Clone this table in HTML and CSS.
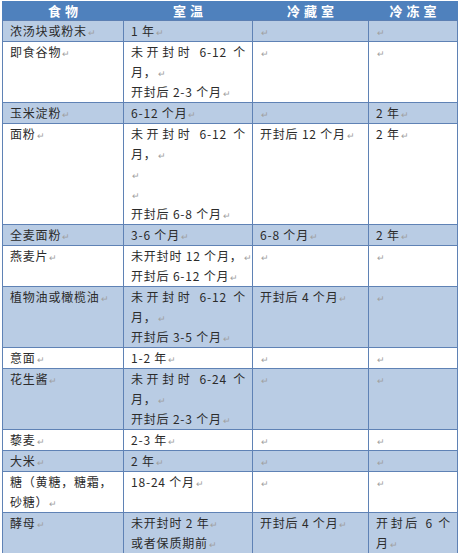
FILE: index.html
```html
<!DOCTYPE html>
<html lang="zh">
<head>
<meta charset="utf-8">
<link rel="stylesheet" href="styles.css">
</head>
<body>
<table class="tbl">
<colgroup><col class="c1"><col class="c2"><col class="c3"><col class="c4"></colgroup>
<thead>
<tr><th>食物</th><th>室温</th><th>冷藏室</th><th>冷冻室</th></tr>
</thead>
<tbody>
<tr><td>浓汤块或粉末<i>↵</i></td><td>1 年<i>↵</i></td><td><i>↵</i></td><td><i>↵</i></td></tr>
<tr><td>即食谷物<i>↵</i></td><td><span class="jl">未开封时 6-12 个</span>月，<i>↵</i><br>开封后 2-3 个月<i>↵</i></td><td><i>↵</i></td><td><i>↵</i></td></tr>
<tr><td>玉米淀粉<i>↵</i></td><td>6-12 个月<i>↵</i></td><td><i>↵</i></td><td>2 年<i>↵</i></td></tr>
<tr><td>面粉<i>↵</i></td><td><span class="jl">未开封时 6-12 个</span>月，<i>↵</i><br><i>↵</i><br><i>↵</i><br>开封后 6-8 个月<i>↵</i></td><td>开封后 12 个月<i>↵</i></td><td>2 年<i>↵</i></td></tr>
<tr><td>全麦面粉<i>↵</i></td><td>3-6 个月<i>↵</i></td><td>6-8 个月<i>↵</i></td><td>2 年<i>↵</i></td></tr>
<tr><td>燕麦片<i>↵</i></td><td>未开封时 12 个月，<i>↵</i><br>开封后 6-12 个月<i>↵</i></td><td><i>↵</i></td><td><i>↵</i></td></tr>
<tr><td>植物油或橄榄油<i>↵</i></td><td><span class="jl">未开封时 6-12 个</span>月，<i>↵</i><br>开封后 3-5 个月<i>↵</i></td><td>开封后 4 个月<i>↵</i></td><td><i>↵</i></td></tr>
<tr><td>意面<i>↵</i></td><td>1-2 年<i>↵</i></td><td><i>↵</i></td><td><i>↵</i></td></tr>
<tr><td>花生酱<i>↵</i></td><td><span class="jl">未开封时 6-24 个</span>月，<i>↵</i><br>开封后 2-3 个月<i>↵</i></td><td><i>↵</i></td><td><i>↵</i></td></tr>
<tr><td>藜麦<i>↵</i></td><td>2-3 年<i>↵</i></td><td><i>↵</i></td><td><i>↵</i></td></tr>
<tr><td>大米<i>↵</i></td><td>2 年<i>↵</i></td><td><i>↵</i></td><td><i>↵</i></td></tr>
<tr><td>糖（黄糖，糖霜，<br>砂糖）<i>↵</i></td><td>18-24 个月<i>↵</i></td><td><i>↵</i></td><td><i>↵</i></td></tr>
<tr><td>酵母<i>↵</i></td><td>未开封时 2 年<i>↵</i><br>或者保质期前<i>↵</i></td><td>开封后 4 个月<i>↵</i></td><td><span class="jl">开封后 6 个</span>月<i>↵</i></td></tr>
</tbody>
</table>
</body>
</html>
```

FILE: styles.css
```css
html, body {
  margin: 0;
  padding: 0;
  background: #ffffff;
}
body {
  padding: 1px 2px 0 2px;
}
.tbl {
  width: 455px;
  table-layout: fixed;
  border-collapse: collapse;
  font-family: "Noto Sans CJK SC", "Noto Sans", sans-serif;
  font-size: 12px;
  color: #2b2b2b;
  letter-spacing: 0.8px;
}
.c1 { width: 121px; }
.c2 { width: 129px; }
.c3 { width: 116px; }
.c4 { width: 89px; }
.tbl th {
  background: #4f81bd;
  color: #ffffff;
  font-weight: bold;
  font-size: 13px;
  letter-spacing: 4px;
  height: 18px;
  line-height: 18px;
  padding: 0 0 0 4px;
  text-align: center;
  border: 1px solid #4f81bd;
  border-bottom-color: #5c7fb3;
}
.tbl td {
  vertical-align: top;
  height: 20px;
  line-height: 20px;
  padding: 0 6px 0 7px;
  border: 1px solid #5f82b5;
  text-align: left;
  overflow: hidden;
  white-space: nowrap;
}
.tbl tbody tr:nth-child(odd) td {
  background: #b9cce4;
}
.tbl i {
  font-style: normal;
  font-size: 9px;
  line-height: 1;
  color: #a0a0a0;
  letter-spacing: 0;
  margin-left: 1px;
}
.jl {
  display: block;
  text-align: justify;
  text-align-last: justify;
  white-space: normal;
}
```
